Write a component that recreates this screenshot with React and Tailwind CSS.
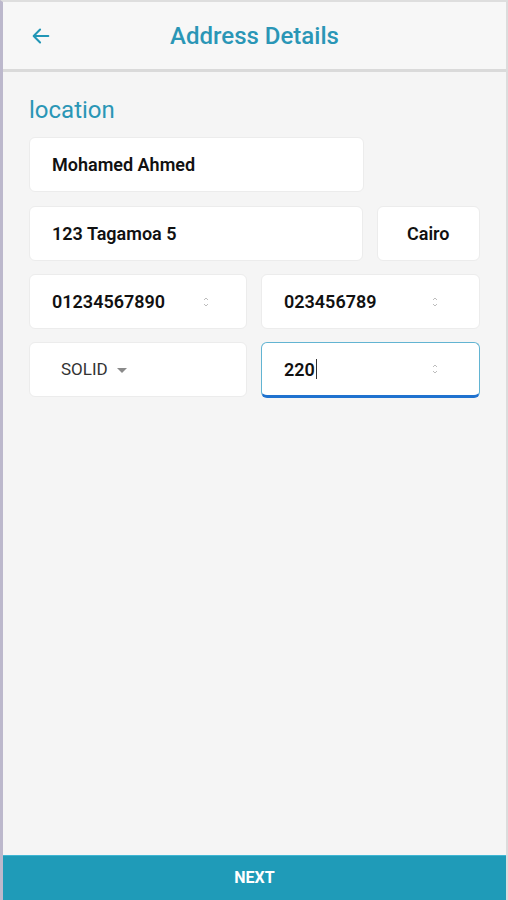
import React from "react";

function Spinner() {
  return (
    <svg width="8" height="14" viewBox="0 0 8 14" className="shrink-0">
      <path d="M2 5 L4 3 L6 5" fill="none" stroke="#bdbdbd" strokeWidth="1" />
      <path d="M2 9 L4 11 L6 9" fill="none" stroke="#bdbdbd" strokeWidth="1" />
    </svg>
  );
}

function Box({ className = "", children }) {
  return (
    <div className={`h-[55px] bg-white rounded-[6px] border border-[#ececec] flex items-center ${className}`}>
      {children}
    </div>
  );
}

export default function App() {
  return (
    <div
      className="w-[508px] h-[900px] bg-[#f5f5f5] flex flex-col border-l-[3px] border-l-[#bcb8cc] border-r-2 border-r-[#dcdcdc] border-t-2 border-t-[#dedede] overflow-hidden"
      style={{ fontFamily: "Roboto, 'Liberation Sans', sans-serif" }}
    >
      <div className="h-[70px] shrink-0 bg-[#f7f7f7] flex items-center relative border-b-[3px] border-b-[#dadada]">
        <svg width="22" height="22" viewBox="0 0 24 24" className="absolute left-[27px] top-[23px]">
          <path d="M20 12 H5 M11 5 L4 12 L11 19" fill="none" stroke="#2196b6" strokeWidth="2.2" strokeLinecap="round" strokeLinejoin="round" />
        </svg>
        <div className="w-full text-center text-[24px] font-medium text-[#2a96b6]">Address Details</div>
      </div>

      <div className="flex-1 flex flex-col px-[26px]">
        <div className="mt-[24px] text-[24px] text-[#2a96b6] leading-[28px]">location</div>
        <div className="mt-[13px] flex flex-col">
          <Box className="w-[335px] pl-[22px]">
            <span className="text-[18px] font-semibold text-[#111]">Mohamed Ahmed</span>
          </Box>
          <div className="flex gap-[14px] mt-[14px]">
            <Box className="w-[335px] pl-[22px]">
              <span className="text-[18px] font-semibold text-[#111]">123 Tagamoa 5</span>
            </Box>
            <Box className="w-[104px] justify-center">
              <span className="text-[18px] font-semibold text-[#111]">Cairo</span>
            </Box>
          </div>
          <div className="flex gap-[14px] mt-[13px]">
            <Box className="w-[219px] pl-[22px] pr-[36px] justify-between">
              <span className="text-[18px] font-semibold text-[#111]">01234567890</span>
              <Spinner />
            </Box>
            <Box className="w-[220px] pl-[22px] pr-[40px] justify-between">
              <span className="text-[18px] font-semibold text-[#111]">023456789</span>
              <Spinner />
            </Box>
          </div>
          <div className="flex gap-[14px] mt-[13px]">
            <Box className="w-[219px] pl-[31px]">
              <span className="text-[17px] text-[#333]">SOLID</span>
              <svg width="12" height="8" viewBox="0 0 12 8" className="ml-[8px]">
                <path d="M1 2 L11 2 L6 7 Z" fill="#8a8a8a" />
              </svg>
            </Box>
            <div className="w-[220px] h-[56px] bg-white rounded-[6px] border border-[#62b4d2] border-b-[3px] border-b-[#1f72cf] flex items-center pl-[22px] pr-[40px] justify-between">
              <span className="text-[18px] font-semibold text-[#111] flex items-center">
                220<span className="inline-block w-[1px] h-[20px] bg-[#333] ml-[1px]" />
              </span>
              <Spinner />
            </div>
          </div>
        </div>
      </div>

      <div className="h-[45px] shrink-0 bg-[#1f9bb8] border-t border-t-[#3fb6d3] flex items-center justify-center">
        <span className="text-white font-bold text-[16px]">NEXT</span>
      </div>
    </div>
  );
}
